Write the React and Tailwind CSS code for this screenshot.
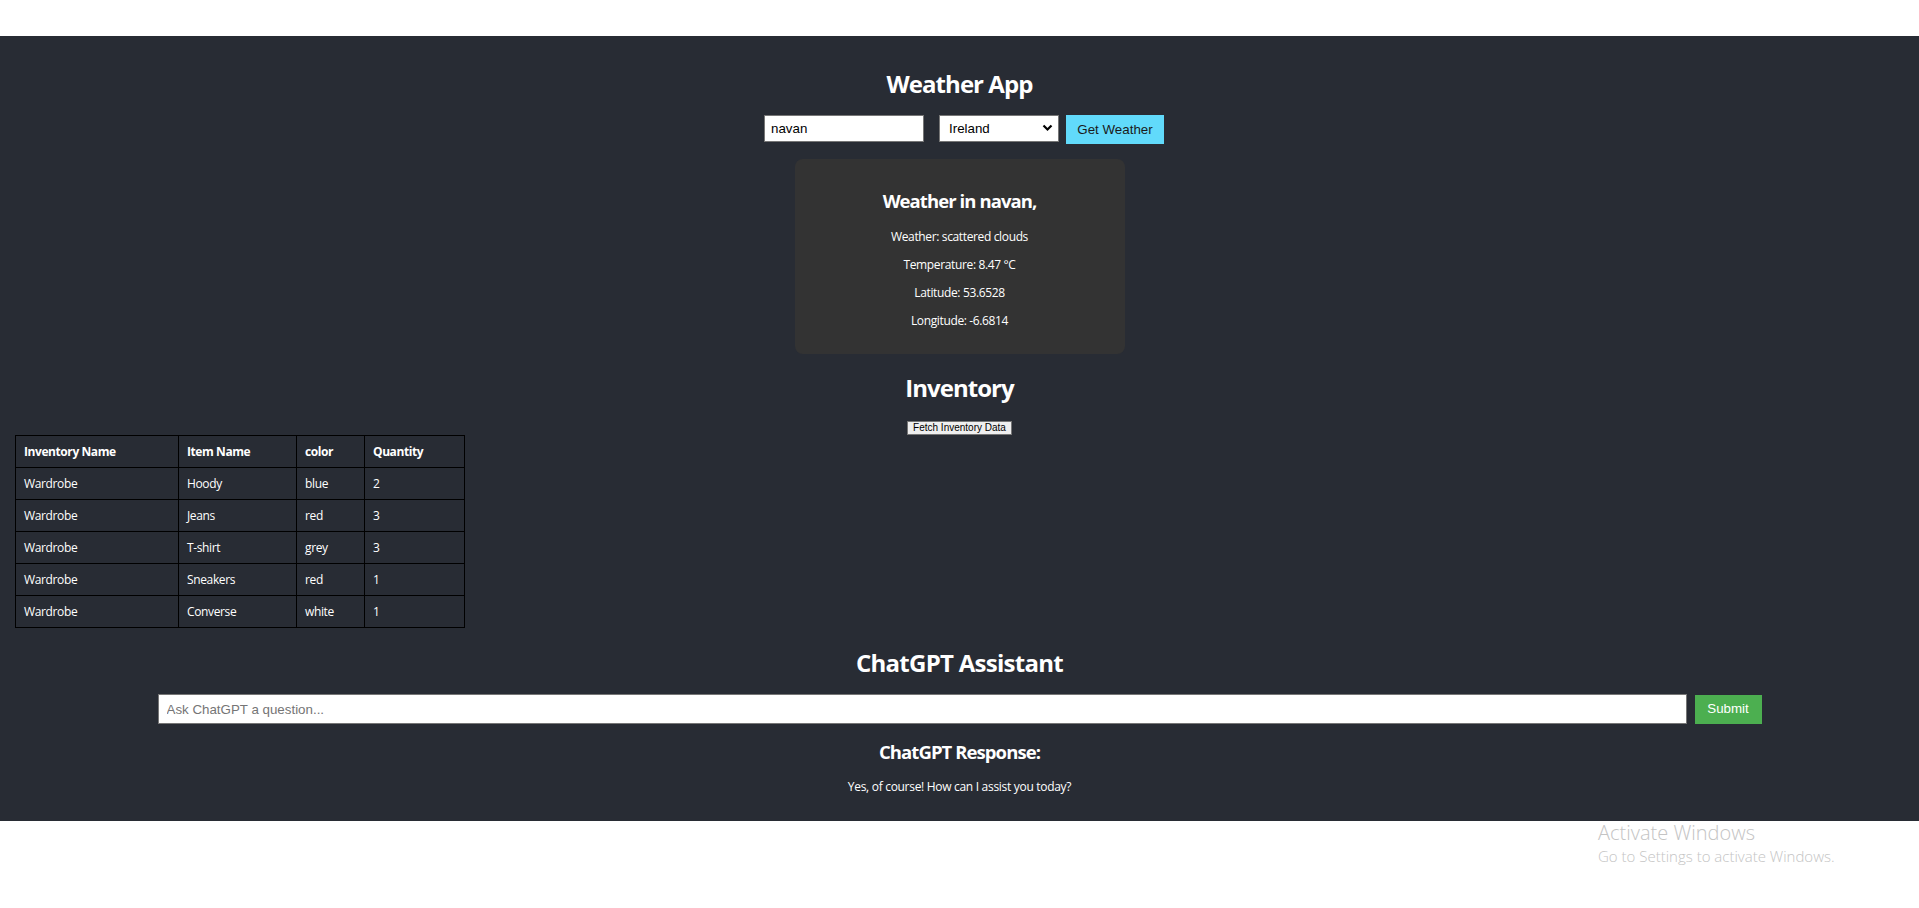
import React, { useState } from 'react'

const inventory = [
    { inventoryName: 'Wardrobe', itemName: 'Hoody', color: 'blue', quantity: 2 },
    { inventoryName: 'Wardrobe', itemName: 'Jeans', color: 'red', quantity: 3 },
    { inventoryName: 'Wardrobe', itemName: 'T-shirt', color: 'grey', quantity: 3 },
    { inventoryName: 'Wardrobe', itemName: 'Sneakers', color: 'red', quantity: 1 },
    { inventoryName: 'Wardrobe', itemName: 'Converse', color: 'white', quantity: 1 },
]

const App = () => {
    const [city, setCity] = useState('navan');
    const [country, setCountry] = useState('Ireland');
    const [question, setQuestion] = useState('');

    return (
        <div className="min-h-[908px] bg-white font-['Open_Sans',sans-serif] relative">
            <div className="h-[36px]" />
            <div className="bg-[#282c34] text-white text-center pt-[32px] pb-[26px]">
                <h2 className="text-[24px] leading-[32px] font-bold tracking-[-0.04em]">Weather App</h2>

                <div className="flex justify-center items-start mt-[15px] pl-[9px] font-['Liberation_Sans',Arial,sans-serif] text-[13.33px]">
                    <input
                        value={city}
                        onChange={(e) => setCity(e.target.value)}
                        className="w-[160px] h-[27px] bg-white text-black border border-[#767676] px-[6px] outline-none"
                    />
                    <div className="relative ml-[15px]">
                        <select
                            value={country}
                            onChange={(e) => setCountry(e.target.value)}
                            className="appearance-none w-[120px] h-[27px] bg-white text-black border border-[#767676] pl-[9px] outline-none"
                        >
                            <option>Ireland</option>
                            <option>United Kingdom</option>
                            <option>France</option>
                        </select>
                        <svg className="absolute right-[6px] top-[9px] pointer-events-none" width="11" height="8" viewBox="0 0 11 8">
                            <path d="M1.5 1.5 L5.5 5.5 L9.5 1.5" stroke="#000" strokeWidth="2.2" fill="none" />
                        </svg>
                    </div>
                    <button className="ml-[7px] w-[98px] h-[29px] bg-[#61dafb] text-[#1a1a1a]">Get Weather</button>
                </div>

                <div className="mx-auto mt-[15px] w-[330px] h-[195px] bg-[#333333] rounded-[8px] pt-[30px]">
                    <h3 className="text-[18.5px] leading-[24px] font-bold tracking-[-0.05em]">Weather in navan,</h3>
                    <p className="text-[12px] leading-[16px] tracking-[-0.03em] mt-[16px]">Weather: scattered clouds</p>
                    <p className="text-[12px] leading-[16px] tracking-[-0.03em] mt-[12px]">Temperature: 8.47 °C</p>
                    <p className="text-[12px] leading-[16px] tracking-[-0.03em] mt-[12px]">Latitude: 53.6528</p>
                    <p className="text-[12px] leading-[16px] tracking-[-0.03em] mt-[12px]">Longitude: -6.6814</p>
                </div>

                <h2 className="text-[24px] leading-[32px] font-bold tracking-[-0.04em] mt-[18px]">Inventory</h2>
                <button className="block mx-auto mt-[17px] h-[14px] px-[5px] bg-[#efefef] text-black border border-[#767676] text-[10px] leading-[12px] font-['Liberation_Sans',Arial,sans-serif]">
                    Fetch Inventory Data
                </button>

                <div className="pl-[15px] text-left">
                    <table className="border-collapse text-[12px] tracking-[-0.03em]">
                        <thead>
                            <tr className="h-[32px]">
                                <th className="border border-black px-[8px] pt-[1px] text-left font-bold tracking-[-0.035em] w-[163px]">Inventory Name</th>
                                <th className="border border-black px-[8px] pt-[1px] text-left font-bold tracking-[-0.035em] w-[118px]">Item Name</th>
                                <th className="border border-black px-[8px] pt-[1px] text-left font-bold tracking-[-0.035em] w-[68px]">color</th>
                                <th className="border border-black px-[8px] pt-[1px] text-left font-bold tracking-[-0.035em] w-[100px]">Quantity</th>
                            </tr>
                        </thead>
                        <tbody>
                            {inventory.map((item, idx) => (
                                <tr key={idx} className="h-[32px]">
                                    <td className="border border-black px-[8px] pt-[1px]">{item.inventoryName}</td>
                                    <td className="border border-black px-[8px] pt-[1px]">{item.itemName}</td>
                                    <td className="border border-black px-[8px] pt-[1px]">{item.color}</td>
                                    <td className="border border-black px-[8px] pt-[1px]">{item.quantity}</td>
                                </tr>
                            ))}
                        </tbody>
                    </table>
                </div>

                <h2 className="text-[24px] leading-[32px] font-bold tracking-[-0.03em] mt-[19px]">ChatGPT Assistant</h2>
                <div className="flex justify-center items-center mt-[15px] font-['Liberation_Sans',Arial,sans-serif] text-[13.33px]">
                    <input
                        value={question}
                        onChange={(e) => setQuestion(e.target.value)}
                        placeholder="Ask ChatGPT a question..."
                        className="w-[1529px] h-[30px] bg-white text-black border border-[#767676] px-[8px] outline-none placeholder:text-[#757575]"
                    />
                    <button className="ml-[8px] w-[67px] h-[29px] bg-[#4caf50] text-white">Submit</button>
                </div>

                <h3 className="text-[18.5px] leading-[24px] font-bold tracking-[-0.05em] mt-[16px]">ChatGPT Response:</h3>
                <p className="text-[12px] leading-[16px] tracking-[-0.025em] mt-[15px]">Yes, of course! How can I assist you today?</p>
            </div>

            <div className="absolute left-[1598px] top-[820px] text-[#c4c4c4] font-['Open_Sans',sans-serif] font-light">
                <div className="text-[20px] leading-[26px]">Activate Windows</div>
                <div className="text-[15px] leading-[20px]">Go to Settings to activate Windows.</div>
            </div>
        </div>
    )
}

export default App
